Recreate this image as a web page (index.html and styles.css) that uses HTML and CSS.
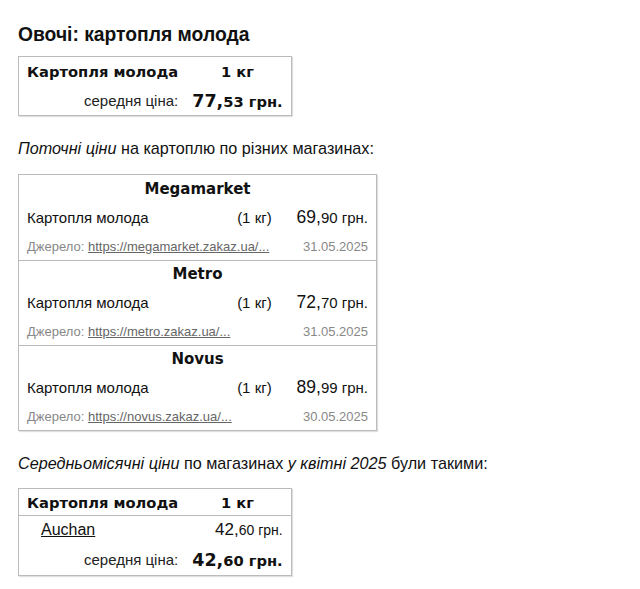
FILE: index.html
```html
<!DOCTYPE html>
<html lang="uk">
<head>
<meta charset="utf-8">
<link rel="stylesheet" href="styles.css">
</head>
<body>
<div class="page">
  <h2 class="title">Овочі: картопля молода</h2>
  <table class="box summary">
    <tr class="head"><td class="name">Картопля молода</td><td class="unit">1 кг</td></tr>
    <tr class="avgrow"><td class="avg-label">середня ціна:</td><td class="avg"><span class="big">77,</span>53 грн.</td></tr>
  </table>

  <p class="intro"><i>Поточні ціни</i> на картоплю по різних магазинах:</p>
  <table class="box shops">
    <tr class="shop"><td colspan="3">Megamarket</td></tr>
    <tr class="item"><td class="iname">Картопля молода</td><td class="iunit">(1 кг)</td><td class="price"><span class="big">69,</span>90 грн.</td></tr>
    <tr class="src"><td colspan="2">Джерело: <a href="#">https://megamarket.zakaz.ua/...</a></td><td class="date">31.05.2025</td></tr>
    <tr class="shop sep"><td colspan="3">Metro</td></tr>
    <tr class="item"><td class="iname">Картопля молода</td><td class="iunit">(1 кг)</td><td class="price"><span class="big">72,</span>70 грн.</td></tr>
    <tr class="src"><td colspan="2">Джерело: <a href="#">https://metro.zakaz.ua/...</a></td><td class="date">31.05.2025</td></tr>
    <tr class="shop sep"><td colspan="3">Novus</td></tr>
    <tr class="item"><td class="iname">Картопля молода</td><td class="iunit">(1 кг)</td><td class="price"><span class="big">89,</span>99 грн.</td></tr>
    <tr class="src"><td colspan="2">Джерело: <a href="#">https://novus.zakaz.ua/...</a></td><td class="date">30.05.2025</td></tr>
  </table>

  <p class="intro second"><i>Середньомісячні ціни</i> по магазинах <i>у квітні 2025</i> були такими:</p>
  <table class="box summary">
    <tr class="head underline"><td class="name">Картопля молода</td><td class="unit">1 кг</td></tr>
    <tr class="storerow"><td class="store"><a href="#">Auchan</a></td><td class="sprice"><span class="mid">42,</span>60 грн.</td></tr>
    <tr class="avgrow last"><td class="avg-label">середня ціна:</td><td class="avg"><span class="big">42,</span>60 грн.</td></tr>
  </table>
</div>
</body>
</html>
```

FILE: styles.css
```css
html, body {
  margin: 0;
  padding: 0;
  background: #fff;
}
.page {
  padding: 24px 18px 10px;
  font-family: "Liberation Sans", Arial, sans-serif;
  font-size: 16px;
  color: #111;
}
.title {
  font-family: "Liberation Sans", Arial, sans-serif;
  font-size: 19.3px;
  font-weight: bold;
  margin: 0 0 10px;
  line-height: 22px;
}
.box {
  border-collapse: collapse;
  border: 1px solid #bbb;
  box-shadow: 1px 1px 1px rgba(0,0,0,0.12);
}
.box td {
  padding: 0 8px;
  white-space: nowrap;
}
.summary td {
  height: 29px;
}
.summary .name,
.summary .avg-label,
.summary .store {
  padding-right: 6px;
}
.head td {
  font-family: "DejaVu Sans", Verdana, sans-serif;
  font-weight: bold;
  font-size: 14.7px;
}
.underline td {
  height: 26px;
  border-bottom: 1px solid #bbb;
}
.head .unit {
  text-align: center;
}
.avg-label {
  text-align: right;
  color: #222;
  font-size: 15px;
}
.avg {
  text-align: right;
  font-family: "DejaVu Sans", Verdana, sans-serif;
  font-weight: bold;
  font-size: 14.7px;
}
.avg .big {
  font-size: 17.5px;
}
.storerow td {
  height: 28px;
}
.last td {
  height: 31px;
}
.store {
  padding-left: 22px !important;
}
.store a {
  color: #111;
}
.sprice {
  text-align: right;
  font-size: 14px;
}
.sprice .mid {
  font-size: 17px;
}
.intro {
  margin: 23px 0 17px;
  font-size: 16.2px;
  line-height: 18px;
}
.intro.second {
  margin-top: 23px;
  margin-bottom: 16px;
}
.shops {
  width: 359px;
}
.shop td {
  text-align: center;
  font-family: "DejaVu Sans", Verdana, sans-serif;
  font-weight: bold;
  font-size: 15px;
  height: 27px;
}
.sep td {
  border-top: 1px solid #bbb;
  height: 26px;
}
.item td {
  height: 30px;
  font-size: 15px;
}
.iunit {
  text-align: right;
  padding-right: 14px !important;
}
.price {
  text-align: right;
  font-size: 14px;
}
.price .big {
  font-size: 17.5px;
}
.src td {
  font-size: 13px;
  color: #888;
  height: 28px;
}
.src a {
  color: #666;
}
.date {
  text-align: right;
}
```
